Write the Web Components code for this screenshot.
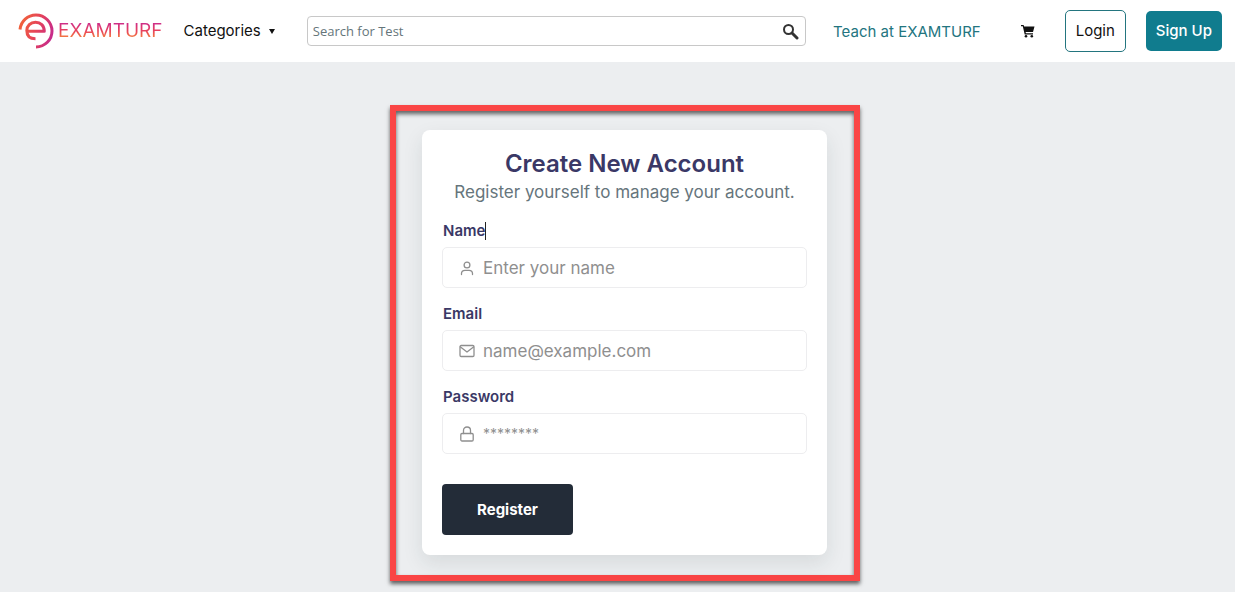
<!DOCTYPE html>
<html lang="en">
<head>
<meta charset="utf-8">
<meta name="viewport" content="width=device-width, initial-scale=1">
<title>Create New Account - EXAMTURF</title>
<style>
  body { margin: 0; min-height: 100vh; background: #eceef0; font-family: Inter, "Open Sans", sans-serif; color: #111; }
</style>
</head>
<body>
<site-header>
  <site-logo slot="brand">EXAMTURF</site-logo>
  <category-menu slot="menu">Categories</category-menu>
  <site-search slot="search"></site-search>
  <nav-link slot="links" href="#teach">Teach at EXAMTURF</nav-link>
  <cart-link slot="links"></cart-link>
  <action-button slot="actions" variant="outline">Login</action-button>
  <action-button slot="actions" variant="solid">Sign Up</action-button>
</site-header>
<highlight-frame>
  <register-card></register-card>
</highlight-frame>

<script>
function define(name, html, setup) {
  customElements.define(name, class extends HTMLElement {
    constructor() {
      super();
      this.attachShadow({ mode: 'open' }).innerHTML = html;
    }
    connectedCallback() {
      if (setup) setup(this, this.shadowRoot);
    }
  });
}

define('site-header', `
<style>
  :host { display: block; background: #fff; }
  header { display: flex; align-items: center; height: 62px; padding: 0 13px 0 18px; }
  .menu { margin-left: 21px; }
  .search { flex: 1; margin: 0 27px 0 32px; min-width: 0; }
  .links { display: flex; align-items: center; gap: 40px; }
  .actions { display: flex; align-items: center; gap: 20px; margin-left: 30px; }
</style>
<header>
  <slot name="brand"></slot>
  <div class="menu"><slot name="menu"></slot></div>
  <div class="search"><slot name="search"></slot></div>
  <nav class="links" aria-label="Main"><slot name="links"></slot></nav>
  <div class="actions"><slot name="actions"></slot></div>
</header>`);

define('site-logo', `
<style>
  :host { display: block; flex: none; }
  a { display: flex; align-items: center; gap: 4px; text-decoration: none; }
  svg { display: block; width: 36px; height: 36px; }
  span { font-size: 19px; line-height: 24px; color: transparent;
    background: linear-gradient(to top, #f5823c 20%, #e8425c 50%, #cc2c8c 85%);
    -webkit-background-clip: text; background-clip: text; -webkit-text-stroke: 0 transparent; }
</style>
<a href="#home">
  <svg viewBox="0 0 36 36" fill="none" stroke="url(#g)" aria-hidden="true">
    <defs><linearGradient id="g" gradientUnits="userSpaceOnUse" x1="2" y1="14" x2="34" y2="24">
      <stop offset="0" stop-color="#f0603c"/><stop offset=".5" stop-color="#e5435a"/><stop offset="1" stop-color="#c62a8c"/>
    </linearGradient></defs>
    <path d="M2 16.500A16 16 0 0 1 18 2A16 16 0 0 1 18 34" stroke-width="3"/>
    <path d="M9 18.300H26.300C26.300 12.500 22.500 9.200 17.500 9.200C12.500 9.200 8.800 13 8.800 17.500C8.800 22.800 12 25.800 17.500 25.800" stroke-width="3" stroke-linejoin="round"/>
  </svg>
  <span><slot></slot></span>
</a>`);

define('category-menu', `
<style>
  :host { display: block; }
  button { display: flex; align-items: center; gap: 8px; padding: 0; border: 0; background: none; font: inherit; font-size: 15px; line-height: 20px; color: #111; }
  i { width: 0; height: 0; border: 3px solid transparent; border-top: 5px solid #111; border-bottom: 0; }
</style>
<button type="button" aria-haspopup="true"><span><slot></slot></span><i></i></button>`);

define('site-search', `
<style>
  :host { display: block; }
  form { display: flex; align-items: center; box-sizing: border-box; height: 30px; padding: 0 6px 0 5px; border: 1px solid #c8c8c8; border-radius: 4px; background: #fff; }
  input { flex: 1; min-width: 0; padding: 0; border: 0; outline: 0; background: none; font: 13px/20px "Open Sans", sans-serif; color: #333; }
  input::placeholder { color: #65757a; opacity: 1; }
  button { padding: 0; border: 0; background: none; }
  svg { display: block; width: 17px; height: 17px; }
</style>
<form role="search">
  <input type="search" aria-label="Search for Test" placeholder="Search for Test">
  <button type="button" aria-label="Search">
    <svg viewBox="0 0 17 17" fill="none" stroke="#333"><circle cx="6.500" cy="6.500" r="4.500" stroke-width="2"/><path d="M10 10l5 5" stroke-width="3" stroke-linecap="round"/></svg>
  </button>
</form>`);

define('nav-link', `
<style>
  :host { display: block; }
  a { font-size: 15px; line-height: 20px; color: #23757f; text-decoration: none; white-space: nowrap; }
</style>
<a><slot></slot></a>`, (el, root) => { root.querySelector('a').href = el.getAttribute('href'); });

define('cart-link', `
<style>
  :host { display: block; }
  svg { display: block; width: 14px; height: 14px; }
</style>
<a href="#cart" aria-label="Cart">
  <svg viewBox="0 0 14 14"><path d="M0 1h2.600l.5 1.500H13.500L12 8H4.600l.3 1.300H12v1.200H3.700L1.800 2.300H0z" fill="#111"/><circle cx="5" cy="12.300" r="1.300" fill="#111"/><circle cx="10.800" cy="12.300" r="1.300" fill="#111"/></svg>
</a>`);

define('action-button', `
<style>
  :host { display: block; }
  button { box-sizing: border-box; height: 40px; padding: 0 10px; border: 0; border-radius: 5px; background: #107c8e; color: #fff; font: inherit; font-size: 15px; font-weight: 500; line-height: 20px; white-space: nowrap; }
  :host([variant=outline]) button { height: 42px; border: 1px solid #23757f; background: #fff; color: #111; font-weight: 400; }
</style>
<button type="button"><slot></slot></button>`);

define('highlight-frame', `
<style>
  :host { display: flex; justify-content: center; padding: 43px 0 11px 15px; }
  div { box-sizing: border-box; flex: 0 1 470px; padding: 19px 27px 20px 26px; border: 6px solid #fa4545;
    box-shadow: 0 3px 4px rgba(0,0,0,.6), inset 0 3px 4px rgba(0,0,0,.6); }
</style>
<div><slot></slot></div>`);

define('form-field', `
<style>
  :host { display: block; }
  .label { display: flex; align-items: center; height: 18px; padding-left: 1px; font-size: 15px; font-weight: 600; line-height: 18px; color: #3a3866; }
  .box { display: flex; align-items: center; gap: 8px; box-sizing: border-box; height: 41px; margin-top: 7px; padding: 0 16px; border: 1px solid #ededef; border-radius: 5px; background: #fff; }
  input { flex: 1; min-width: 0; padding: 0; border: 0; outline: 0; background: none; font: inherit; font-size: 17px; line-height: 20px; color: #333; }
  input[type=password] { font-size: 14px; }
  input::placeholder { color: #8f8f8f; opacity: 1; }
</style>
<div class="label"><label for="control"></label><slot name="caret"></slot></div>
<div class="box"><slot name="icon"></slot><input id="control"></div>`, (el, root) => {
  root.querySelector('label').textContent = el.getAttribute('label');
  const input = root.querySelector('input');
  input.type = el.getAttribute('type');
  input.placeholder = el.getAttribute('placeholder');
});

define('register-card', `
<style>
  :host { display: block; box-sizing: border-box; padding: 20px; border-radius: 8px; background: #fff; box-shadow: 0 8px 20px rgba(30,50,50,.1); }
  h1 { margin: 0; font-size: 24px; font-weight: 600; line-height: 28px; text-align: center; color: #3a3866; }
  p { margin: 3px 0 19px; font-size: 17px; line-height: 22px; text-align: center; color: #66757c; white-space: nowrap; }
  form-field { margin-bottom: 17px; }
  svg { display: block; flex: none; width: 16px; height: 16px; fill: none; stroke: #8f8f8f; stroke-width: 1.3; stroke-linejoin: round; stroke-linecap: round; }
  .caret { width: 1px; height: 18px; background: #222; }
  button { display: block; box-sizing: border-box; width: 131px; height: 51px; margin-top: 30px; padding: 0; border: 0; border-radius: 4px; background: #232c38; color: #fff; font: inherit; font-size: 15px; font-weight: 700; }
</style>
<form>
  <h1>Create New Account</h1>
  <p>Register yourself to manage your account.</p>
  <form-field label="Name" type="text" placeholder="Enter your name">
    <span slot="caret" class="caret"></span>
    <svg slot="icon" viewBox="0 0 16 16"><circle cx="8" cy="5" r="2.900"/><path d="M2.500 14.500V13.500C2.500 11.300 4 10.300 6 10.300H10C12 10.300 13.500 11.300 13.500 13.500V14.500"/></svg>
  </form-field>
  <form-field label="Email" type="email" placeholder="name@example.com">
    <svg slot="icon" viewBox="0 0 16 16"><rect x="1" y="2.500" width="14" height="11" rx="1.200"/><path d="M1.500 4L8 9L14.500 4"/></svg>
  </form-field>
  <form-field label="Password" type="password" placeholder="********">
    <svg slot="icon" viewBox="0 0 16 16"><rect x="1.800" y="7.500" width="12.400" height="7.500" rx="1.200"/><path d="M4.500 7.500V4.500C4.500 2.500 6 1 8 1C10 1 11.500 2.500 11.500 4.500V7.500"/></svg>
  </form-field>
  <button type="button">Register</button>
</form>`);
</script>
</body>
</html>
